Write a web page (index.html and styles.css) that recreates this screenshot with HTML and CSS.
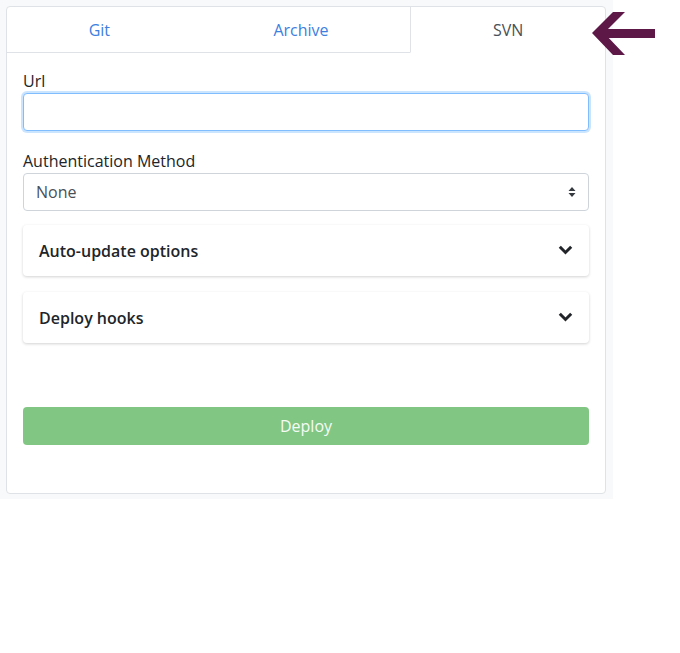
FILE: index.html
```html
<!DOCTYPE html>
<html>
<head>
<meta charset="utf-8">
<link rel="stylesheet" href="styles.css">
</head>
<body>
<div class="page">
  <div class="panel">
    <div class="tabs">
      <a class="tab">Git</a>
      <a class="tab">Archive</a>
      <a class="tab active">SVN</a>
    </div>
    <div class="panel-body">
      <div class="group">
        <label class="label">Url</label>
        <div class="input focus"></div>
      </div>
      <div class="group">
        <label class="label">Authentication Method</label>
        <div class="input select">
          <span>None</span>
          <svg class="updown" width="8" height="12" viewBox="0 0 8 12"><path d="M4 1 L7.5 5 H0.5 Z M4 11 L7.5 7 H0.5 Z" fill="#343a40"/></svg>
        </div>
      </div>
      <div class="acc">
        <span>Auto-update options</span>
        <svg class="chev" width="15" height="10" viewBox="0 0 15 10"><path d="M1.8 1.8 L7.5 7.5 L13.2 1.8" fill="none" stroke="#212529" stroke-width="3"/></svg>
      </div>
      <div class="acc second">
        <span>Deploy hooks</span>
        <svg class="chev" width="15" height="10" viewBox="0 0 15 10"><path d="M1.8 1.8 L7.5 7.5 L13.2 1.8" fill="none" stroke="#212529" stroke-width="3"/></svg>
      </div>
      <button class="deploy">Deploy</button>
    </div>
  </div>
  <svg class="arrow" width="64" height="46" viewBox="0 0 64 46">
    <polygon points="21,1 33,1 12,22 33,44 21,44 0,22" fill="#5e1848"/>
    <rect x="10" y="18" width="53" height="9" fill="#5e1848"/>
  </svg>
</div>
</body>
</html>
```

FILE: styles.css
```css
html, body {
  margin: 0;
  padding: 0;
  background: #ffffff;
}
body {
  font-family: "Open Sans", "Noto Sans", sans-serif;
  font-size: 16px;
  line-height: 24px;
  color: #212529;
}
.page {
  position: relative;
  width: 600px;
  padding: 6px 7px 5px 6px;
  background: #f8f9fa;
}
.panel {
  background: #fff;
  border: 1px solid #dfe2e6;
  border-radius: 4px;
  display: flex;
  flex-direction: column;
  overflow: hidden;
}
.tabs {
  display: flex;
}
.tab {
  flex: 1 1 auto;
  text-align: center;
  padding: 11px 16px 10px;
  color: #3d80df;
  border-bottom: 1px solid #dfe2e6;
}
.tab.active {
  color: #495057;
  border-bottom-color: transparent;
  border-left: 1px solid #dfe2e6;
}
.panel-body {
  padding: 16px 16px 48px;
  display: flex;
  flex-direction: column;
}
.group {
  display: flex;
  flex-direction: column;
  margin-bottom: 18px;
}
.group + .group {
  margin-bottom: 14px;
}
.label {
  font-size: 16px;
  line-height: 24px;
}
.input {
  height: 36px;
  border: 1px solid #ced4da;
  border-radius: 4px;
  background: #fff;
}
.input.focus {
  border-color: #80bdff;
  box-shadow: 0 0 0 2px rgba(0, 123, 255, 0.2);
}
.select {
  display: flex;
  align-items: center;
  justify-content: space-between;
  padding: 0 12px;
  color: #495057;
}
.updown {
  display: block;
}
.acc {
  height: 51px;
  background: #fff;
  border-radius: 4px;
  box-shadow: 0 1px 3px rgba(0, 0, 0, 0.18);
  display: flex;
  align-items: center;
  justify-content: space-between;
  padding: 0 16px;
  font-weight: 600;
}
.acc.second {
  margin-top: 16px;
}
.chev {
  display: block;
  margin-top: -2px;
}
.deploy {
  margin-top: 64px;
  height: 38px;
  border: none;
  border-radius: 4px;
  background: #82c684;
  color: #f4fbf4;
  font-family: inherit;
  font-size: 16px;
}
.arrow {
  position: absolute;
  left: 592px;
  top: 11px;
}
```
